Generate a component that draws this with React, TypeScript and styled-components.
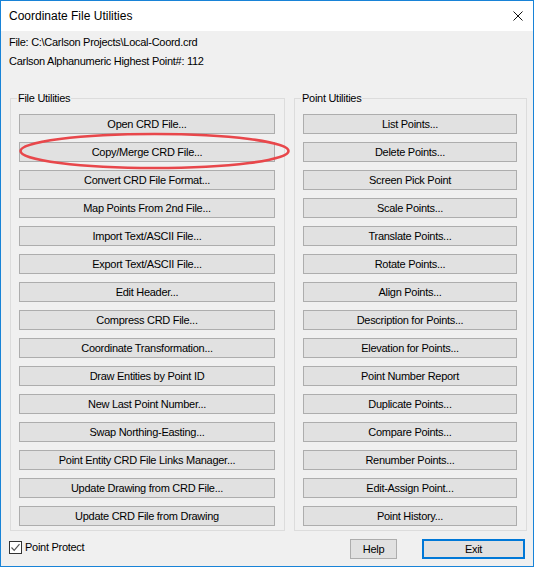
import styled, { createGlobalStyle } from "styled-components";

const GlobalStyle = createGlobalStyle`
  html, body {
    margin: 0;
    padding: 0;
    background: #ffffff;
  }
  * {
    box-sizing: border-box;
  }
`;

const fileButtons = [
  "Open CRD File...",
  "Copy/Merge CRD File...",
  "Convert CRD File Format...",
  "Map Points From 2nd File...",
  "Import Text/ASCII File...",
  "Export Text/ASCII File...",
  "Edit Header...",
  "Compress CRD File...",
  "Coordinate Transformation...",
  "Draw Entities by Point ID",
  "New Last Point Number...",
  "Swap Northing-Easting...",
  "Point Entity CRD File Links Manager...",
  "Update Drawing from CRD File...",
  "Update CRD File from Drawing",
];

const pointButtons = [
  "List Points...",
  "Delete Points...",
  "Screen Pick Point",
  "Scale Points...",
  "Translate Points...",
  "Rotate Points...",
  "Align Points...",
  "Description for Points...",
  "Elevation for Points...",
  "Point Number Report",
  "Duplicate Points...",
  "Compare Points...",
  "Renumber Points...",
  "Edit-Assign Point...",
  "Point History...",
];

export default function App() {
  return (
    <>
      <GlobalStyle />
      <Window>
        <TitleBar>
          <span>Coordinate File Utilities</span>
          <CloseIcon width="10" height="10" viewBox="0 0 10 10">
            <path d="M0.5 0.5 L9.5 9.5 M9.5 0.5 L0.5 9.5" stroke="#111" strokeWidth="1" />
          </CloseIcon>
        </TitleBar>

        <Info>
          <p>File: C:\Carlson Projects\Local-Coord.crd</p>
          <p>Carlson Alphanumeric Highest Point#: 112</p>
        </Info>

        <Groups>
          <Group width={275}>
            <Legend>File Utilities</Legend>
            {fileButtons.map((label) => (
              <Button key={label}>{label}</Button>
            ))}
          </Group>
          <Group width={233}>
            <Legend>Point Utilities</Legend>
            {pointButtons.map((label) => (
              <Button key={label}>{label}</Button>
            ))}
          </Group>
        </Groups>

        <Footer>
          <CheckLabel>
            <CheckBox>
              <svg width="11" height="11" viewBox="0 0 11 11">
                <path d="M1.5 5.5 L4.2 8.3 L9.5 2.2" fill="none" stroke="#555" strokeWidth="1.2" />
              </svg>
            </CheckBox>
            Point Protect
          </CheckLabel>
          <FooterButtons>
            <Button as="div" $w={47}>Help</Button>
            <Button as="div" $w={103} $default>
              Exit
            </Button>
          </FooterButtons>
        </Footer>

        <Highlight width="534" height="567" viewBox="0 0 534 567">
          <ellipse cx="154.5" cy="151" rx="134" ry="17" fill="none" stroke="#e8474b" strokeWidth="2.6" />
        </Highlight>
      </Window>
    </>
  );
}

const Window = styled.div`
  position: relative;
  width: 534px;
  height: 567px;
  border: 1px solid #1883d7;
  background: #f0f0f0;
  display: flex;
  flex-direction: column;
  font-family: "Liberation Sans", Arial, sans-serif;
  font-size: 11px;
  letter-spacing: -0.28px;
  color: #000;
`;

const TitleBar = styled.div`
  height: 30px;
  background: #ffffff;
  display: flex;
  align-items: center;
  justify-content: space-between;
  padding: 0 10px 0 8px;
  font-size: 12px;
  letter-spacing: 0;
  color: #000;
`;

const CloseIcon = styled.svg`
  display: block;
  margin-top: -1px;
`;

const Info = styled.div`
  padding: 2px 8px 0;

  & > p {
    margin: 0;
    line-height: 19px;
    white-space: nowrap;
  }
`;

const Groups = styled.div`
  margin-top: 27px;
  display: flex;
  gap: 9px;
  padding: 0 6px 0 9px;
`;

const Group = styled.div<{ width: number }>`
  position: relative;
  width: ${({ width }) => width}px;
  border: 1px solid #dcdcdc;
  padding: 15px 9px 4px 8px;
  display: flex;
  flex-direction: column;
  gap: 8px;
`;

const Legend = styled.span`
  position: absolute;
  top: -8px;
  left: 6px;
  padding: 0 1px;
  background: #f0f0f0;
  line-height: 15px;
`;

const Button = styled.button<{ $w?: number; $default?: boolean }>`
  height: 20px;
  width: ${({ $w }) => ($w ? `${$w}px` : "auto")};
  margin: 0;
  padding: 0;
  background: #e1e1e1;
  border: ${({ $default }) => ($default ? "2px solid #0078d7" : "1px solid #adadad")};
  font: inherit;
  letter-spacing: inherit;
  color: #000;
  display: flex;
  align-items: center;
  justify-content: center;
  white-space: nowrap;
`;

const Footer = styled.div`
  margin-top: 8px;
  padding: 0 8px;
  display: flex;
  align-items: flex-start;
  justify-content: space-between;
`;

const CheckLabel = styled.label`
  display: flex;
  align-items: center;
  gap: 3px;
  margin-top: 2px;
  line-height: 13px;
`;

const CheckBox = styled.span`
  width: 13px;
  height: 13px;
  border: 1px solid #333;
  background: #ffffff;
  display: flex;
  align-items: center;
  justify-content: center;
`;

const FooterButtons = styled.div`
  display: flex;
  gap: 25px;
`;

const Highlight = styled.svg`
  position: absolute;
  top: -1px;
  left: -1px;
  pointer-events: none;
`;
